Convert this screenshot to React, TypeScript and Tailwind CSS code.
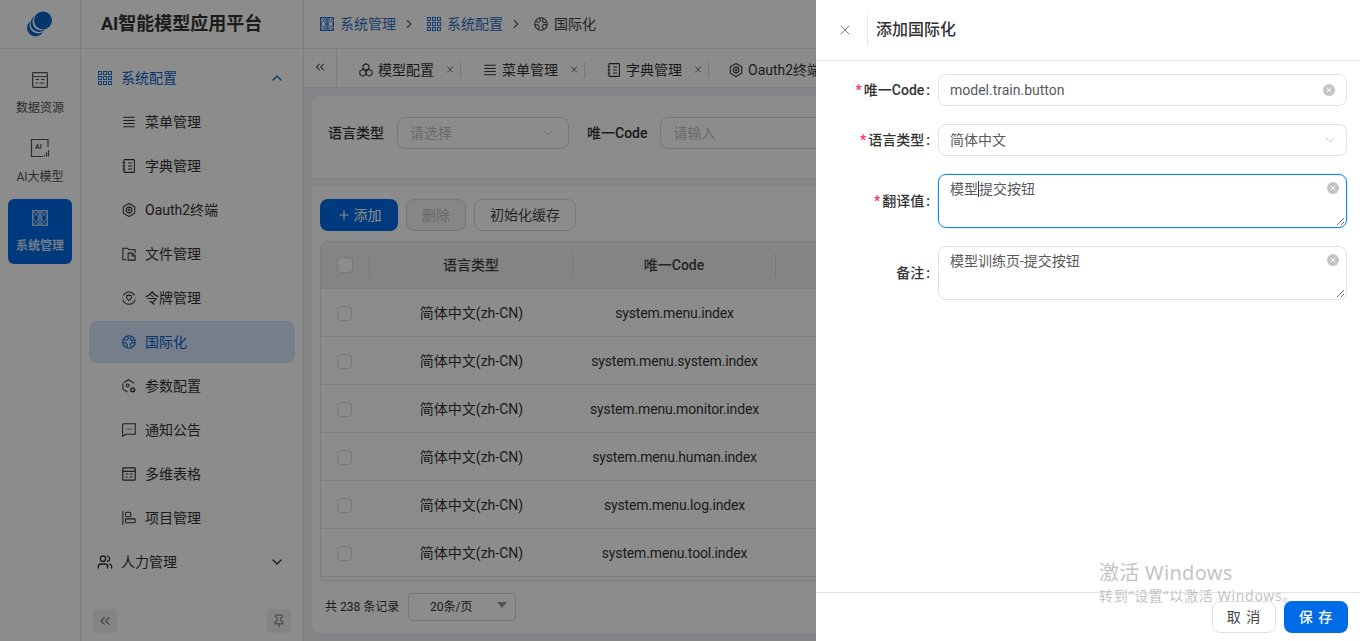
import { ChevronDown, ChevronRight, ChevronUp, ChevronsLeft, Plus, X, Pin, Users } from 'lucide-react';
import type { ReactNode } from 'react';

type IconProps = { className?: string };

// shared wrapper for the hand drawn 16x16 icons
function Svg({ className = 'h-4 w-4', children }: IconProps & { children: ReactNode }) {
  return (
    <svg viewBox="0 0 16 16" fill="none" stroke="currentColor" strokeWidth="1.2" className={`shrink-0 ${className}`}>
      {children}
    </svg>
  );
}

const Grid = ({ className }: IconProps) => (
  <Svg className={className}>
    {[0.5, 6.2, 11.9].flatMap((x) =>
      [0.5, 6.2, 11.9].map((y) => <rect key={`${x}-${y}`} x={x} y={y} width="3.6" height="3.6" strokeWidth="1" />),
    )}
  </Svg>
);

const SystemIcon = ({ className }: IconProps) => (
  <Svg className={className}>
    <rect x="0.7" y="0.7" width="6.3" height="14.6" />
    <rect x="9" y="0.7" width="6.3" height="14.6" />
    <path d="M.7.7 7 8 .7 15.3M7 .7.7 8 7 15.3M9 .7 15.3 8 9 15.3M15.3.7 9 8l6.3 7.3" strokeWidth="0.8" />
  </Svg>
);

const DataIcon = ({ className }: IconProps) => (
  <Svg className={className}>
    <rect x="0.6" y="0.6" width="14.8" height="14.8" rx="0.8" />
    <path d="M.6 4.5h14.8M3.5 7.5h3.5M9 7.5h3.5M3.5 11h2.5M7.5 11h5" />
  </Svg>
);

const AiIcon = ({ className }: IconProps) => (
  <svg viewBox="0 0 20 20" fill="none" stroke="currentColor" className={`shrink-0 ${className}`}>
    <path d="M18 9V1.5H1.5v17H13" strokeWidth="1.2" />
    <path d="M14.5 18.5v-1.5M16.5 18.5v-4M18.5 18.5v-6.5" strokeWidth="1.2" />
    <text x="5" y="11" fontSize="7" fontWeight="700" fill="currentColor" stroke="none">AI</text>
  </svg>
);

const LinesIcon = ({ className }: IconProps) => (
  <Svg className={className}>
    <path d="M1.5 2.5h13M1.5 6.2h13M1.5 9.8h13M1.5 13.5h13" />
  </Svg>
);

const DictIcon = ({ className }: IconProps) => (
  <Svg className={className}>
    <rect x="2.2" y="0.7" width="12" height="14.6" rx="0.8" />
    <path d="M.7 4.2h3M.7 8h3M.7 11.8h3M7 4.5h4.5M7 8h4.5M7 11.5h4.5" />
  </Svg>
);

const OauthIcon = ({ className }: IconProps) => (
  <Svg className={className}>
    <path d="M8 .6 14.5 4.3v7.4L8 15.4l-6.5-3.7V4.3z" />
    <circle cx="8" cy="8" r="3.3" />
    <path d="M8 6.3v3.4M6.3 8h3.4" />
  </Svg>
);

const FileIcon = ({ className }: IconProps) => (
  <Svg className={className}>
    <path d="M5 14.5H1V1.5h5.5L8 3.2h7V7" />
    <path d="M7 7h4.8L15 10v5H7z" />
    <path d="M11.5 7v3.3H15" />
  </Svg>
);

const TokenIcon = ({ className }: IconProps) => (
  <Svg className={className}>
    <path d="M1.6 5A7.3 7.3 0 0 1 14.4 5M15 9.8A7.3 7.3 0 0 1 1 9.8M.7 7.3v.8M15.3 7.3v.6" />
    <path d="M5.4 5h5.2v3.4L8 10.9 5.4 8.4z" />
  </Svg>
);

const GlobeIcon = ({ className }: IconProps) => (
  <Svg className={className}>
    <circle cx="8" cy="8" r="7.2" />
    <path d="M6 1 7.5 4 5.5 6 1.5 5.2M1 8.5l3.5.5 1.6 2.2-1 3.6M10.7 1.4l-1.2 3.6 2 1.5 3.4-1M15 9.2l-3.5-.7-2 2 1.2 3.8" />
  </Svg>
);

const ParamIcon = ({ className }: IconProps) => (
  <Svg className={className}>
    <path d="M14 5 7.5.8 1 4.6v7L6.5 15" strokeDasharray="14 1.5" />
    <circle cx="6.5" cy="7.5" r="1.7" />
    <circle cx="12.3" cy="12.3" r="2.2" strokeWidth="1.6" />
  </Svg>
);

const NoticeIcon = ({ className }: IconProps) => (
  <Svg className={className}>
    <path d="M1.6.9h13.5v12H4.6L.7 15.2V1.8z" />
    <path d="M4.8 7h1M7.4 7h1M10 7h1" />
  </Svg>
);

const SheetIcon = ({ className }: IconProps) => (
  <Svg className={className}>
    <rect x="0.9" y="1" width="14.2" height="14" rx="0.8" strokeWidth="1.4" />
    <path d="M.9 5h14.2M4 8h3.5M9 8h3M4 11.5h2.5M8.5 11.5h3.5" />
  </Svg>
);

const ProjectIcon = ({ className }: IconProps) => (
  <Svg className={className}>
    <path d="M1 0v16" />
    <rect x="4" y="1.5" width="6" height="5" rx="1.2" />
    <rect x="4" y="9" width="11" height="4.5" rx="0.6" />
  </Svg>
);

const ModelIcon = ({ className }: IconProps) => (
  <Svg className={className}>
    <path d="M8 .8 11.3 2.7v3.7L8 8.3 4.7 6.4V2.7z" />
    <path d="M4.4 7.3 7.7 9.2v3.9L4.4 15 1 13.1V9.2zM11.6 7.3 15 9.2v3.9L11.6 15l-3.3-1.9V9.2z" />
  </Svg>
);

function Logo() {
  return (
    <svg viewBox="0 0 28 26" className="h-[26px] w-[28px]">
      <circle cx="9.5" cy="17" r="8.5" fill="#0a63c9" />
      <circle cx="12" cy="14" r="8.5" fill="#ffffff" />
      <circle cx="13" cy="12.5" r="8.5" fill="#0a63c9" />
      <circle cx="15" cy="11" r="8.5" fill="#ffffff" />
      <circle cx="17" cy="9.5" r="9" fill="#0a63c9" />
    </svg>
  );
}

const subMenus = [
  { label: '菜单管理', icon: LinesIcon },
  { label: '字典管理', icon: DictIcon },
  { label: 'Oauth2终端', icon: OauthIcon },
  { label: '文件管理', icon: FileIcon },
  { label: '令牌管理', icon: TokenIcon },
  { label: '国际化', icon: GlobeIcon, active: true },
  { label: '参数配置', icon: ParamIcon },
  { label: '通知公告', icon: NoticeIcon },
  { label: '多维表格', icon: SheetIcon },
  { label: '项目管理', icon: ProjectIcon },
];

const tabs = [
  { label: '模型配置', icon: ModelIcon },
  { label: '菜单管理', icon: LinesIcon },
  { label: '字典管理', icon: DictIcon },
];

const codes = [
  'system.menu.index',
  'system.menu.system.index',
  'system.menu.monitor.index',
  'system.menu.human.index',
  'system.menu.log.index',
  'system.menu.tool.index',
];

function Rail() {
  return (
    <aside className="flex w-[81px] shrink-0 flex-col items-center border-r border-[#e4e4e4]">
      <div className="flex h-[49px] w-full items-center justify-center border-b border-[#e4e4e4]">
        <Logo />
      </div>
      <div className="mt-[22px] flex h-[52px] flex-col items-center text-[#555]">
        <DataIcon className="my-px h-4 w-4" />
        <span className="mt-[11px] text-xs leading-4">数据资源</span>
      </div>
      <div className="mt-[15px] flex h-[52px] flex-col items-center text-[#555]">
        <AiIcon className="h-5 w-5" />
        <span className="mt-[11px] text-xs leading-4">AI大模型</span>
      </div>
      <div className="mt-[9px] flex h-[65px] w-16 flex-col items-center rounded-md bg-[#006be6] pt-[10px] text-white">
        <SystemIcon className="my-px h-4 w-4 opacity-80" />
        <span className="mt-[11px] text-xs font-bold leading-4 opacity-80">系统管理</span>
      </div>
    </aside>
  );
}

function SubMenu() {
  return (
    <aside className="flex w-[223px] shrink-0 flex-col border-r border-[#e4e4e4]">
      <div className="flex h-[49px] items-center border-b border-[#e4e4e4] pl-5 text-lg font-bold text-[#333]">
        AI智能模型应用平台
      </div>
      <div className="mt-[7px] flex h-[44px] items-center pl-[17px] pr-[18px] text-sm text-[#0a63c9]">
        <Grid className="h-[14px] w-[14px]" />
        <span className="ml-[9px] flex-1">系统配置</span>
        <ChevronUp className="h-4 w-4" />
      </div>
      {subMenus.map((m) => (
        <div
          key={m.label}
          className={`mx-2 my-px flex h-[42px] items-center rounded-lg pl-[33px] text-sm ${
            m.active ? 'bg-[#d5e5fb] text-[#0a63c9]' : 'text-[#333]'
          }`}
        >
          <m.icon className="h-[14px] w-[14px] shrink-0" />
          <span className="ml-[9px]">{m.label}</span>
        </div>
      ))}
      <div className="flex h-[44px] items-center pl-[16px] pr-[18px] text-sm text-[#333]">
        <Users className="h-4 w-4" />
        <span className="ml-[8px] flex-1">人力管理</span>
        <ChevronDown className="h-4 w-4" />
      </div>
      <div className="mt-auto mb-2 flex justify-between px-3">
        <div className="flex h-6 w-6 items-center justify-center rounded bg-[#f0f0f0] text-[#888]">
          <ChevronsLeft className="h-4 w-4" />
        </div>
        <div className="flex h-6 w-6 items-center justify-center rounded bg-[#f0f0f0] text-[#888]">
          <Pin className="h-[14px] w-[14px]" />
        </div>
      </div>
    </aside>
  );
}

function Crumbs() {
  return (
    <div className="flex h-[49px] items-center border-b border-[#e4e4e4] pl-4 text-sm">
      <SystemIcon className="h-[14px] w-[14px] text-[#0a63c9]" />
      <span className="ml-[6px] text-[#2f6fc0]">系统管理</span>
      <ChevronRight className="ml-[6px] h-[14px] w-[14px] text-[#666]" />
      <Grid className="ml-[11px] h-[14px] w-[14px] text-[#0a63c9]" />
      <span className="ml-[6px] text-[#2f6fc0]">系统配置</span>
      <ChevronRight className="ml-[6px] h-[14px] w-[14px] text-[#666]" />
      <GlobeIcon className="ml-[11px] h-[14px] w-[14px] text-[#444]" />
      <span className="ml-[6px] text-[#444]">国际化</span>
    </div>
  );
}

function Tabs() {
  return (
    <div className="flex h-[39px] border-b border-[#e4e4e4] text-sm text-[#333]">
      <div className="flex h-full w-[33px] items-center justify-center border-r border-[#e4e4e4] pb-[3px] text-[#666]">
        <ChevronsLeft className="h-[14px] w-[14px]" />
      </div>
      {tabs.map((t) => (
        <div key={t.label} className="flex h-full w-[124px] items-center pl-[22px] pt-[3px]">
          <t.icon className="h-[14px] w-[14px]" />
          <span className="ml-[5px] whitespace-nowrap">{t.label}</span>
          <X className="ml-[11px] h-[13px] w-[13px]" strokeWidth={1.8} />
          <span className="ml-[5px] h-4 w-px bg-[#d9d9d9]" />
        </div>
      ))}
      <div className="flex h-full items-center whitespace-nowrap pl-[20px] pt-[3px]">
        <OauthIcon className="h-[14px] w-[14px]" />
        <span className="ml-[5px]">Oauth2终端</span>
      </div>
    </div>
  );
}

function SearchCard() {
  return (
    <section className="flex h-[82px] items-center rounded-t-lg bg-white pb-2 pl-4 text-sm">
      <span className="font-medium text-[#333]">语言类型</span>
      <div className="ml-[13px] flex h-8 w-[172px] items-center justify-between rounded-lg border border-[#d9d9d9] px-3 text-[#bfbfbf]">
        请选择
        <ChevronDown className="h-4 w-4" strokeWidth={1.2} />
      </div>
      <span className="ml-[18px] font-medium text-[#333]">唯一Code</span>
      <div className="ml-[13px] flex h-8 w-[260px] items-center rounded-lg border border-[#d9d9d9] px-3 text-[#bfbfbf]">
        请输入
      </div>
    </section>
  );
}

function TableCard() {
  return (
    <section className="mt-2 flex h-[447px] flex-col rounded-b-lg bg-white px-2 pt-[13px]">
      <div className="flex gap-2 text-sm">
        <button className="flex h-8 w-[78px] items-center justify-center gap-[3px] rounded-lg bg-[#006be6] text-white">
          <Plus className="h-[14px] w-[14px]" />
          添加
        </button>
        <button className="h-8 w-[60px] rounded-lg border border-[#d9d9d9] bg-[#f5f5f5] text-[#bfbfbf]">删除</button>
        <button className="h-8 w-[102px] rounded-lg border border-[#d9d9d9] text-[#444]">初始化缓存</button>
      </div>
      <div className="mt-[10px] h-[340px] overflow-hidden rounded-t-lg border border-[#e4e4e4] text-sm">
        <div className="flex h-[47px] items-center border-b border-[#e4e4e4] bg-[#f0f0f0] font-medium text-[#444]">
          <div className="flex h-6 w-[49px] items-center border-r border-[#dcdcdc] pl-4">
            <span className="h-4 w-4 rounded border border-[#d9d9d9] bg-white" />
          </div>
          <div className="flex h-6 w-[203px] items-center justify-center border-r border-[#dcdcdc]">语言类型</div>
          <div className="flex h-6 w-[203px] items-center justify-center border-r border-[#dcdcdc]">唯一Code</div>
        </div>
        {codes.map((code) => (
          <div key={code} className="flex h-[48px] items-center border-b border-[#e4e4e4] pt-px text-[#333]">
            <div className="w-[49px] pl-4">
              <span className="mt-px block h-[15px] w-[15px] rounded border border-[#d9d9d9] bg-white" />
            </div>
            <div className="w-[203px] text-center">简体中文(zh-CN)</div>
            <div className="w-[203px] text-center tracking-[-0.15px]">{code}</div>
          </div>
        ))}
      </div>
      <div className="mt-3 flex items-center pl-[5px] text-xs text-[#333]">
        共 238 条记录
        <div className="relative ml-[9px] flex h-7 w-[108px] items-center justify-center rounded border border-[#d9d9d9] pr-[22px]">
          20条/页
          <span className="absolute right-2 top-[8px] h-0 w-0 border-x-[5px] border-t-[6px] border-x-transparent border-t-[#999]" />
        </div>
      </div>
    </section>
  );
}

function ClearDot({ className = '' }: IconProps) {
  return (
    <span className={`flex h-3 w-3 items-center justify-center rounded-full bg-[#c4c4c4] text-white ${className}`}>
      <X className="h-2 w-2" strokeWidth={3} />
    </span>
  );
}

function ResizeGrip() {
  return (
    <svg viewBox="0 0 9 9" className="absolute bottom-px right-px h-[9px] w-[9px] text-[#666]" stroke="currentColor">
      <path d="M1 8 8 1M5 8l3-3" strokeWidth="0.9" />
    </svg>
  );
}

function Label({ text, required }: { text: string; required?: boolean }) {
  return (
    <label className="w-[114px] shrink-0 text-right text-sm font-medium leading-none text-[#333]">
      {required && <span className="mr-[2px] text-[#ff2d6b]">*</span>}
      {text}
      <span className="ml-[2px]">:</span>
    </label>
  );
}

function Drawer() {
  return (
    <aside className="absolute inset-y-0 right-0 flex w-[544px] flex-col bg-white">
      <header className="flex h-[61px] shrink-0 items-center border-b border-[#ebebeb] pl-[21px]">
        <X className="h-4 w-4 text-[#666]" strokeWidth={1.3} />
        <span className="ml-[14px] h-8 w-px bg-[#e8e8e8]" />
        <h2 className="ml-2 text-base font-medium text-[#333]">添加国际化</h2>
      </header>
      <form className="flex flex-1 flex-col pr-[13px] pt-[13px] text-sm text-[#595959]">
        <div className="flex items-center">
          <Label text="唯一Code" required />
          <div className="ml-2 flex h-8 flex-1 items-center justify-between rounded-lg border border-[#e0e0e0] pl-[11px] pr-[11px]">
            model.train.button
            <ClearDot />
          </div>
        </div>
        <div className="mt-[18px] flex items-center">
          <Label text="语言类型" required />
          <div className="ml-2 flex h-8 flex-1 items-center justify-between rounded-lg border border-[#e0e0e0] pl-[11px] pr-[8px]">
            简体中文
            <ChevronDown className="h-4 w-4 text-[#bfbfbf]" strokeWidth={1.2} />
          </div>
        </div>
        <div className="mt-[18px] flex items-center">
          <Label text="翻译值" required />
          <div className="relative ml-2 h-[54px] flex-1 rounded-lg border border-[#0a8cf0] pl-[11px] pt-[4px] shadow-[0_0_0_1px_rgba(10,140,240,0.15)]">
            模型<span className="inline-block h-[16px] w-px bg-[#333] align-[-3px]" />提交按钮
            <ClearDot className="absolute right-[7px] top-[7px]" />
            <ResizeGrip />
          </div>
        </div>
        <div className="mt-[18px] flex items-center">
          <Label text="备注" />
          <div className="relative ml-2 h-[54px] flex-1 rounded-lg border border-[#e0e0e0] pl-[11px] pt-[4px]">
            模型训练页-提交按钮
            <ClearDot className="absolute right-[7px] top-[7px]" />
            <ResizeGrip />
          </div>
        </div>
      </form>
      <footer className="flex h-[49px] shrink-0 items-center justify-end gap-2 border-t border-[#e4e4e4] pr-3">
        <button className="h-8 w-16 rounded-lg border border-[#e0e0e0] bg-white text-sm tracking-[1px] text-[#444]">取 消</button>
        <button className="h-8 w-16 rounded-lg bg-[#006be6] text-sm font-medium tracking-[1px] text-white">保 存</button>
      </footer>
    </aside>
  );
}

export default function App() {
  return (
    <div className="relative flex h-[641px] w-[1360px] overflow-hidden bg-white font-['Roboto','Noto_Sans_CJK_SC',sans-serif]">
      <Rail />
      <SubMenu />
      <main className="flex min-w-0 flex-1 flex-col">
        <Crumbs />
        <Tabs />
        <div className="flex-1 bg-[#f0f2f5] p-2 pb-0">
          <SearchCard />
          <TableCard />
        </div>
      </main>

      {/* mask under the drawer */}
      <div className="absolute inset-0 bg-black/45" />
      <Drawer />

      {/* windows activation watermark */}
      <div className="pointer-events-none absolute left-[1099px] top-[560px] font-['Noto_Sans','Noto_Sans_CJK_SC',sans-serif] text-[#a8a8a8]/70">
        <div className="text-xl leading-[26px] tracking-[0.3px]">激活 Windows</div>
        <div className="text-sm leading-5 tracking-[0.7px]">转到“设置”以激活 Windows。</div>
      </div>
    </div>
  );
}
